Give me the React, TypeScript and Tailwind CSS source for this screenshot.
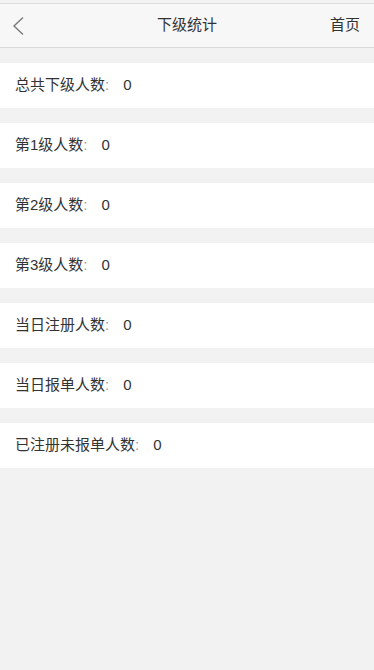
const rows = [
  { label: "总共下级人数", value: 0 },
  { label: "第1级人数", value: 0 },
  { label: "第2级人数", value: 0 },
  { label: "第3级人数", value: 0 },
  { label: "当日注册人数", value: 0 },
  { label: "当日报单人数", value: 0 },
  { label: "已注册未报单人数", value: 0 },
];

export default function App() {
  return (
    <div
      className="min-h-[670px] bg-[#f2f2f2] text-[#333] pt-[3px]"
      style={{ fontFamily: '"Liberation Sans", "Noto Sans CJK SC", sans-serif' }}
    >
      <header className="h-[45px] bg-[#f7f7f7] border-t border-b border-[#dcdcdc] flex items-center relative">
        <button className="w-[40px] h-full flex items-center pl-[12px]">
          <svg width="12" height="20" viewBox="0 0 12 20" fill="none">
            <path d="M11 1.5 L2 10 L11 18.5" stroke="#7a7a7a" strokeWidth="1.4" />
          </svg>
        </button>
        <h1 className="absolute left-0 right-0 text-center text-[15px] pointer-events-none">
          下级统计
        </h1>
        <span className="ml-auto pr-[14px] text-[15px]">首页</span>
      </header>
      <div className="flex flex-col gap-[15px] pt-[15px]">
        {rows.map((r) => (
          <div key={r.label} className="h-[45px] bg-white flex items-center pl-[15px] text-[15px]">
            <span>{r.label}</span>
            <span className="text-[#999]">:</span>
            <span className="ml-[14px]">{r.value}</span>
          </div>
        ))}
      </div>
    </div>
  );
}
